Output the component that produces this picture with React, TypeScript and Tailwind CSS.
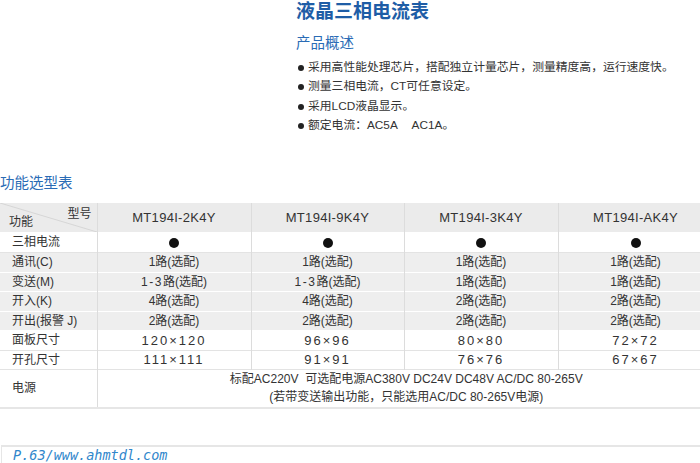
const FONT = '"Liberation Sans", "Noto Sans CJK SC", sans-serif';

const models = ["MT194I-2K4Y", "MT194I-9K4Y", "MT194I-3K4Y", "MT194I-AK4Y"];

type Row = { label: string; cells: string[]; gray?: boolean; wide?: boolean };

const rows: Row[] = [
  { label: "三相电流", cells: ["●", "●", "●", "●"] },
  { label: "通讯(C)", cells: ["1路(选配)", "1路(选配)", "1路(选配)", "1路(选配)"], gray: true },
  { label: "变送(M)", cells: ["1-3路(选配)", "1-3路(选配)", "1路(选配)", "1路(选配)"], gray: true },
  { label: "开入(K)", cells: ["4路(选配)", "4路(选配)", "2路(选配)", "2路(选配)"], gray: true },
  { label: "开出(报警 J)", cells: ["2路(选配)", "2路(选配)", "2路(选配)", "2路(选配)"], gray: true },
  { label: "面板尺寸", cells: ["120×120", "96×96", "80×80", "72×72"], wide: true },
  { label: "开孔尺寸", cells: ["111×111", "91×91", "76×76", "67×67"], wide: true },
];

const bullets = [
  "采用高性能处理芯片，搭配独立计量芯片，测量精度高，运行速度快。",
  "测量三相电流，CT可任意设定。",
  "采用LCD液晶显示。",
  "额定电流：AC5A　 AC1A。",
];

export default function App() {
  return (
    <div
      className="w-[700px] h-[463px] overflow-hidden bg-white text-[#333] flex flex-col"
      style={{ fontFamily: FONT }}
    >
      <div className="ml-[296px] pt-px">
        <h1 className="text-[19px] leading-[22px] font-bold text-[#1e5da6]">液晶三相电流表</h1>
        <h2 className="mt-[11px] text-[14.5px] leading-[18px] text-[#2a6bb5]">产品概述</h2>
        <ul className="mt-[6px] flex flex-col">
          {bullets.map((b) => (
            <li key={b} className="flex items-center h-[19.5px] text-[11.8px] text-[#333]">
              <span className="w-[6px] h-[6px] rounded-full bg-[#222] ml-[2px] mr-[4px] shrink-0" />
              <span className="whitespace-pre">{b}</span>
            </li>
          ))}
        </ul>
      </div>

      <h2 className="mt-[38px] text-[14.5px] leading-[18px] text-[#2a6bb5]">功能选型表</h2>

      <table className="mt-[11px] w-[713px] border-collapse table-fixed text-[12px] text-[#333]">
        <colgroup>
          <col className="w-[97px]" />
          <col className="w-[154px]" />
          <col className="w-[153px]" />
          <col className="w-[154px]" />
          <col className="w-[155px]" />
        </colgroup>
        <thead>
          <tr className="h-[29px] bg-[#ebebeb]">
            <th className="relative p-0 border-r border-[#dcdcdc] font-normal">
              <svg className="absolute inset-0" width="97" height="29">
                <line x1="0" y1="0" x2="97" y2="29" stroke="#d6d6d6" strokeWidth="1" />
              </svg>
              <div className="relative h-[29px] text-[12px]">
                <span className="absolute right-[5px] top-[2px]">型号</span>
                <span className="absolute left-[9px] bottom-[1px]">功能</span>
              </div>
            </th>
            {models.map((m) => (
              <th
                key={m}
                className="p-0 border-r border-[#dcdcdc] font-normal text-[13px] tracking-[0.3px]"
              >
                {m}
              </th>
            ))}
          </tr>
        </thead>
        <tbody>
          {rows.map((r, i) => (
            <tr
              key={r.label}
              className={
                r.gray
                  ? "bg-[#eeeeee] border-b border-white"
                  : "bg-white border-b border-[#e3e3e3]"
              }
            >
              <td
                className={`p-0 pl-[12px] border-r border-[#dcdcdc] ${
                  i === 0 ? "h-[20.5px]" : "h-[19.5px]"
                } leading-none`}
              >
                {r.label}
              </td>
              {r.cells.map((c, j) => (
                <td
                  key={j}
                  className={`p-0 text-center border-r border-[#dcdcdc] leading-none ${
                    r.wide ? "text-[13px] tracking-[2px]" : ""
                  }`}
                >
                  {c === "●" ? (
                    <span className="inline-block w-[10px] h-[10px] rounded-full bg-[#111] align-middle" />
                  ) : c.startsWith("1-3") ? (
                    <>
                      <span className="tracking-[1.5px]">1-3</span>
                      {c.slice(3)}
                    </>
                  ) : (
                    c
                  )}
                </td>
              ))}
            </tr>
          ))}
          <tr className="h-[38px] bg-white border-b-2 border-[#e6e6e6]">
            <td className="p-0 pl-[12px] border-r border-[#dcdcdc]">电源</td>
            <td colSpan={4} className="p-0 pl-[2px] text-center leading-[18px]">
              <div>标配AC220V&nbsp; 可选配电源AC380V DC24V DC48V AC/DC 80-265V</div>
              <div>(若带变送输出功能，只能选用AC/DC 80-265V电源)</div>
            </td>
          </tr>
        </tbody>
      </table>

      <div className="mt-auto h-[18px] border-t-2 border-l border-[#e6e6e6] ml-[1px] pl-[11px] flex items-end">
        <span
          className="text-[13.5px] leading-[16px] italic text-[#2f86cb]"
          style={{ fontFamily: '"DejaVu Sans Mono", monospace' }}
        >
          P.63/www.ahmtdl.com
        </span>
      </div>
    </div>
  );
}
